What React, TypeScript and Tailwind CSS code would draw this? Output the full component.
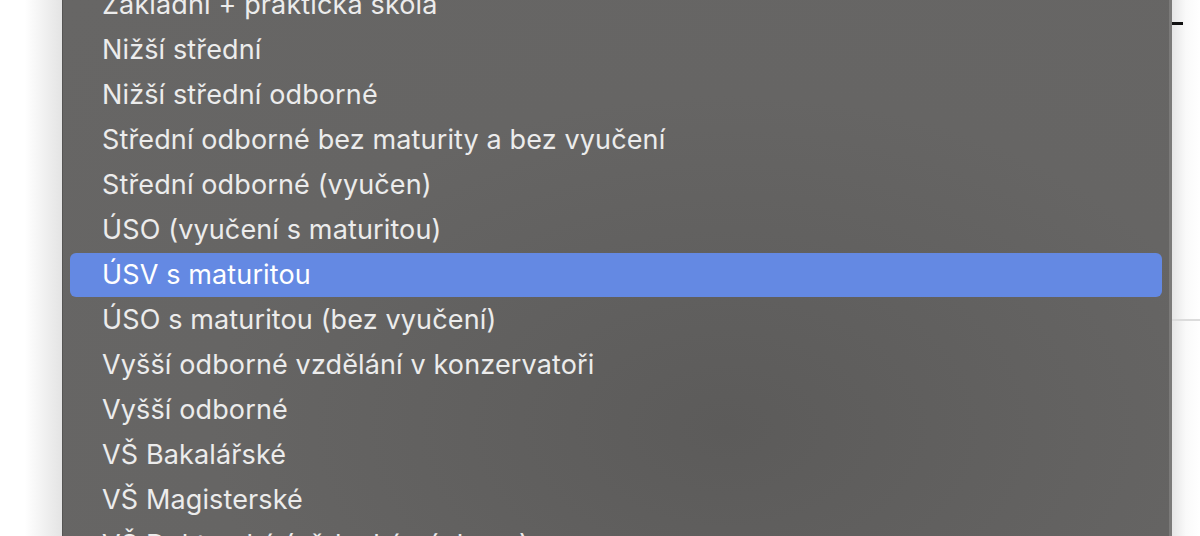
const items = [
  "Základní + praktická škola",
  "Nižší střední",
  "Nižší střední odborné",
  "Střední odborné bez maturity a bez vyučení",
  "Střední odborné (vyučen)",
  "ÚSO (vyučení s maturitou)",
  "ÚSV s maturitou",
  "ÚSO s maturitou (bez vyučení)",
  "Vyšší odborné vzdělání v konzervatoři",
  "Vyšší odborné",
  "VŠ Bakalářské",
  "VŠ Magisterské",
  "VŠ Doktorské (vědecká výchova)",
];

const selected = "ÚSV s maturitou";

export default function App() {
  return (
    <div className="flex h-[536px] w-[1200px] overflow-hidden bg-white font-['Inter',sans-serif]">
      {/* shadow on the left of the menu */}
      <div className="w-[62px] shrink-0 bg-gradient-to-r from-white from-40% to-[#e4e4e4]" />

      <div className="flex w-[1110px] shrink-0 flex-col border-l border-r-[3px] border-l-[#555453] border-r-[#7b7a79] bg-[radial-gradient(ellipse_at_60%_80%,#5c5b5a_0%,#666564_55%,#676665_100%)]">
        <ul className="-mt-[18px] flex flex-col px-[7px]">
          {items.map((item) => (
            <li key={item} className="h-[45px] shrink-0">
              {item === selected ? (
                <div className="mt-[1px] flex h-[44px] items-center rounded-[6px] bg-[#6489e3] pl-[32px] pt-[1px] text-[27px] tracking-[0.13px] text-white">
                  {item}
                </div>
              ) : (
                <div className="flex h-[45px] items-center pl-[32px] pt-[2px] text-[27px] tracking-[0.13px] text-[#ececec]">
                  {item}
                </div>
              )}
            </li>
          ))}
        </ul>
      </div>

      <div className="relative flex-1 bg-gradient-to-r from-[#e6e6e6] via-[#fafafa] to-white">
        <div className="absolute left-0 top-[22px] h-[3px] w-[11px] bg-[#111]" />
        <div className="absolute left-0 top-[319px] h-[2px] w-full bg-[#dcdcdc]" />
      </div>
    </div>
  );
}
